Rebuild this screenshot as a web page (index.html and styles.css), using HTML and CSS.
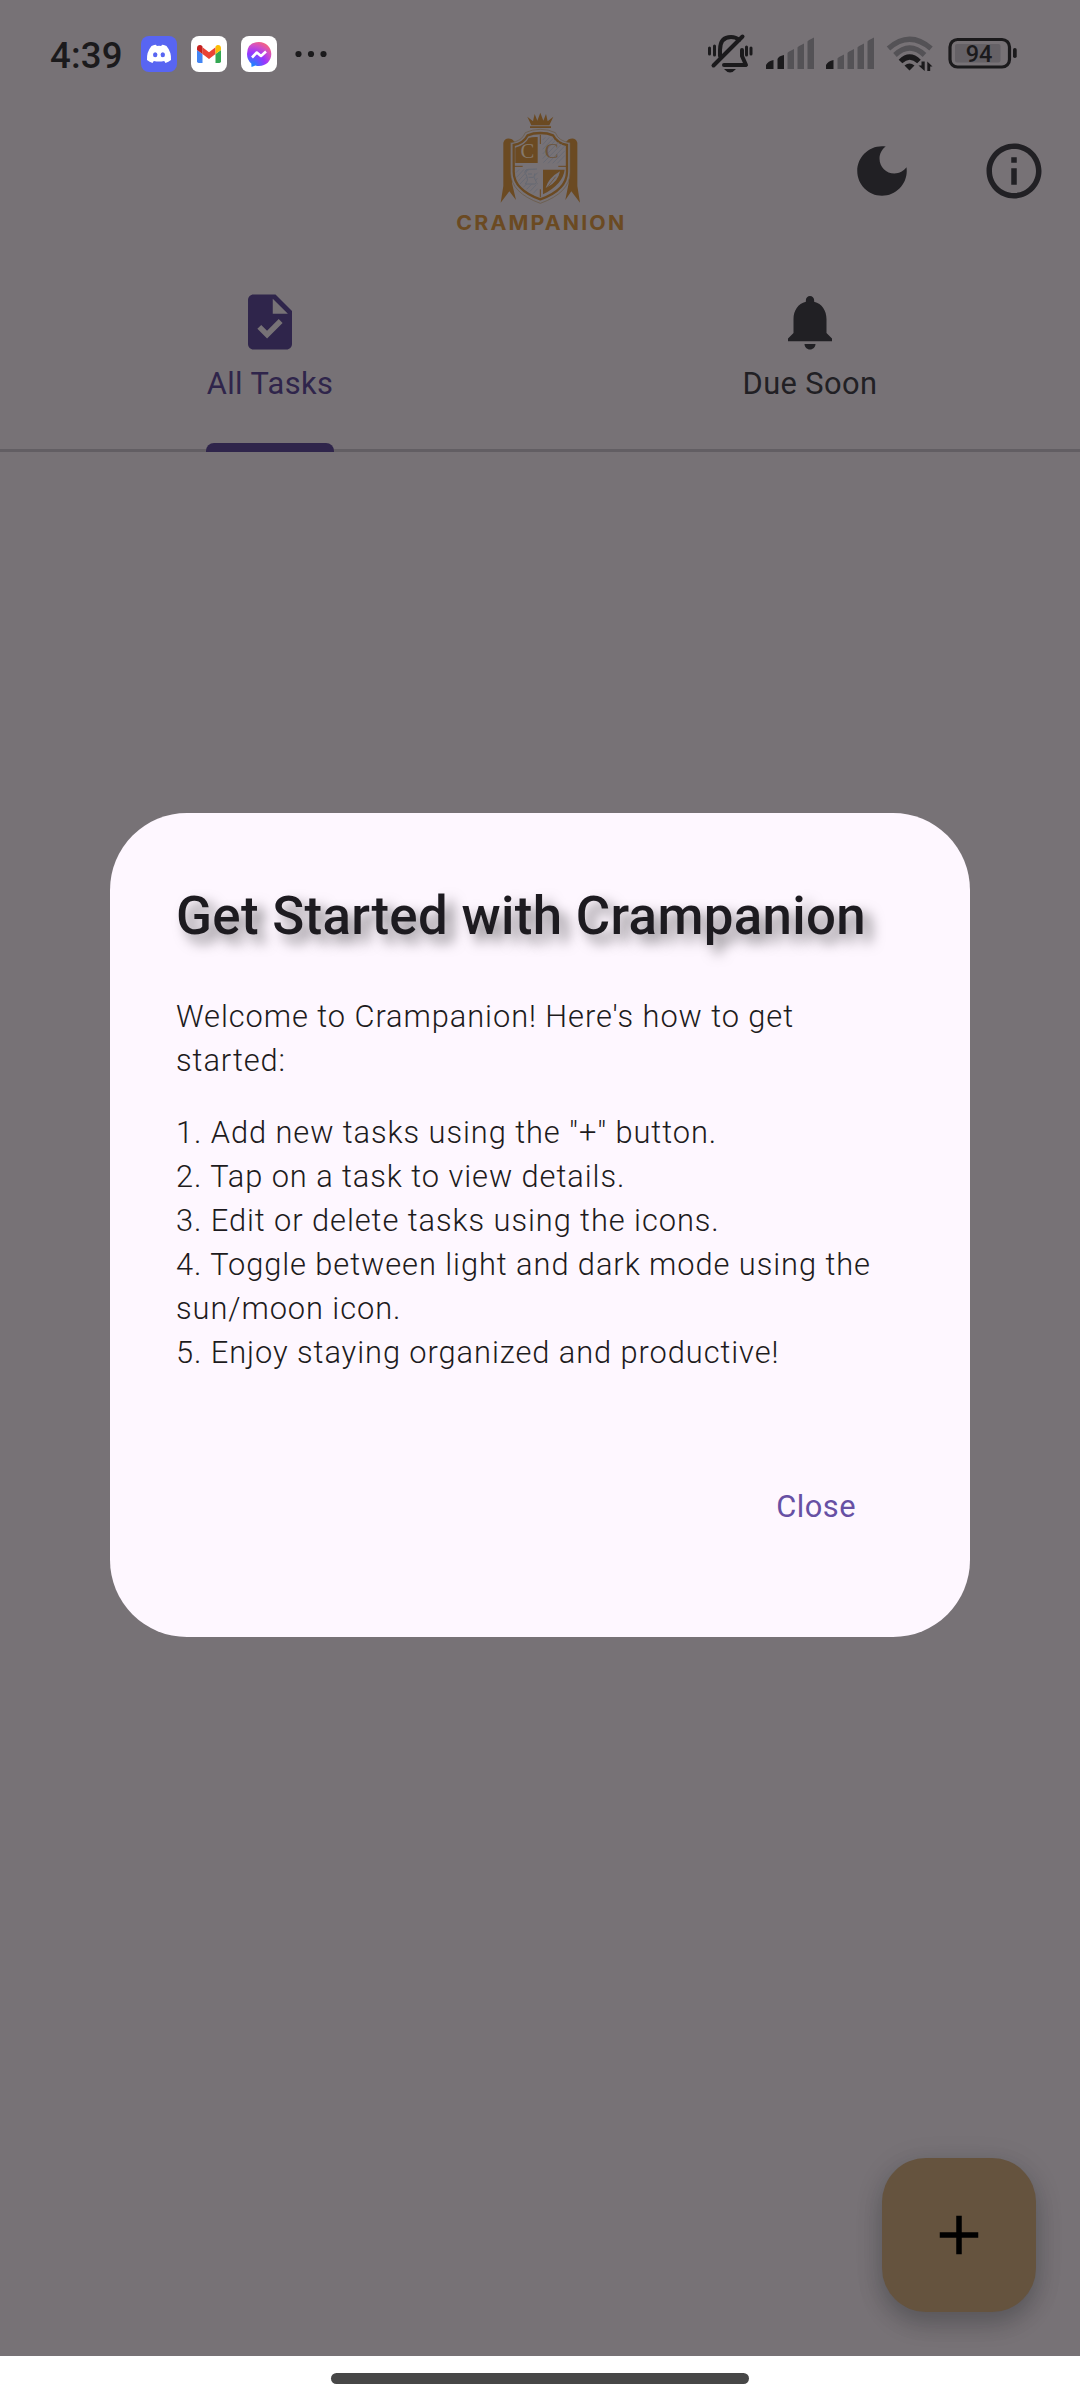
FILE: index.html
```
<!DOCTYPE html>
<html lang="en">
<head>
<meta charset="utf-8">
<title>Crampanion</title>
<link rel="stylesheet" href="styles.css">
</head>
<body>
<div class="screen">
  <header class="status">
    <span class="clock">4:39</span>
    <div class="notifs">
      <svg class="app" viewBox="0 0 36 36"><rect width="36" height="36" rx="8" fill="#5865f2"/><path fill="#fff" d="M10.500 10q3-1.300 4.500-1.300l.8 1.300q2.200-.3 4.400 0l.8-1.300q1.500 0 4.500 1.300Q30.500 16 30 24q-2.500 2.200-5.500 3l-1.300-2.100q-5.200 1.300-10.400 0L11.500 27Q8.500 26.200 6 24 5.500 16 10.500 10z"/><ellipse cx="14.200" cy="18.700" rx="2.200" ry="2.500" fill="#5865f2"/><ellipse cx="21.800" cy="18.700" rx="2.200" ry="2.500" fill="#5865f2"/></svg>
      <svg class="app" viewBox="0 0 36 36"><rect width="36" height="36" rx="8" fill="#fff"/><path fill="#4285f4" d="M6 14l5.500 4v9H7.700Q6 27 6 25.300z"/><path fill="#34a853" d="M30 14l-5.500 4v9h3.800q1.700 0 1.700-1.700z"/><path fill="#ea4335" d="M11.500 11.300L18 16.200l6.500-4.900V18L18 22.900 11.500 18z"/><path fill="#c5221f" d="M6 12Q6.200 9 9 9q1.200 0 2.500 1.400V18L6 14z"/><path fill="#fbbc04" d="M30 12q-.2-3-3-3-1.200 0-2.500 1.400V18l5.500-4z"/></svg>
      <svg class="app" viewBox="0 0 36 36"><defs><radialGradient id="msg" cx=".2" cy="1" r="1.15"><stop offset="0" stop-color="#0a90ff"/><stop offset=".5" stop-color="#9a35ff"/><stop offset=".75" stop-color="#d050c8"/><stop offset="1" stop-color="#ff6968"/></radialGradient></defs><rect width="36" height="36" rx="8" fill="#fff"/><path fill="url(#msg)" d="M18 6c7 0 12.300 5 12.300 12S25 30 18 30q-2 0-3.600-.5L10.500 31l-.2-3.600Q6 24 6 18 6 6 18 6z"/><path fill="none" stroke="#fff" stroke-width="2.600" stroke-linejoin="round" d="M11 21.500l4.800-5 4.200 3.500 5-4.500"/></svg>
      <svg class="dots" viewBox="0 0 32 8"><circle cx="3.500" cy="4" r="3.100"/><circle cx="16" cy="4" r="3.100"/><circle cx="28.500" cy="4" r="3.100"/></svg>
    </div>
    <svg class="indicators" viewBox="690 20 350 70">
      <g stroke="#1b1a1c" fill="none" stroke-width="4" stroke-linecap="round">
        <path d="M720 57V51q0-13 11-13 5 0 8 3M742 51v6l4 9H724" stroke-linejoin="round"/>
        <path d="M713.500 66.500L742.500 37.500"/>
        <path d="M709.500 49v6M714.500 47v9M746.500 48v8M751 49v6" stroke-width="3"/>
      </g>
      <path fill="#1b1a1c" d="M724 70h12q-6 7-12 0z"/>
      <path fill="#545256" d="M787.500 54q0-1 6.500-4v20h-6.500zM797.500 48.500q0-1 6.500-4V70h-6.500zM807.500 42.500q0-1 6.500-4V70h-6.500zM837.500 59.500q0-1 6.500-4V70h-6.500zM847.500 54q0-1 6.500-4v20h-6.500zM857.500 48.500q0-1 6.500-4V70h-6.500zM867.500 42.500q0-1 6.500-4V70h-6.500z"/>
      <path fill="#1b1a1c" d="M766 66q2-4 7.500-5v9H766zM777.500 60q1-3 6.500-4v14h-6.500zM826 66q2-4 7.500-5v9H826z"/>
      <g fill="none" stroke-width="5.200">
        <path stroke="#545256" d="M888.500 49.500q21-18.500 42.500 0M895 56q14.700-14 29.500 0"/>
        <path stroke="#1b1a1c" d="M900.500 62.500q9.200-9 18.500 0"/>
      </g>
      <path fill="#1b1a1c" d="M904.500 66.500q5-4 10 0l-5 5zM921.500 62.500h3.200V72l-6.200-5.500h3zM927.300 72V62.500l5.200 5h-2.300V72z"/>
      <rect x="955" y="45" width="45.500" height="18.500" rx="2" fill="#656166"/>
      <rect x="950" y="40.500" width="59.500" height="27.500" rx="7.500" fill="none" stroke="#1b1a1c" stroke-width="3.200"/>
      <rect x="1013" y="49" width="3.700" height="10" rx="1.800" fill="#1b1a1c"/>
      <text class="charge" x="979" y="63" text-anchor="middle">94</text>
    </svg>
  </header>

  <div class="appbar">
    <svg class="logo" viewBox="0 0 600 420">
      <g fill="#6b4a22">
        <path d="M262 50l17 14 5-22 8 20 9-24 9 24 8-20 5 22 17-14-12 26h-54zM270 79h63v5h-63z"/>
        <path d="M190 128q6-18 26-10l12 12q-12-4-12 14v106l12 50-20-26-26 34 8-50zM412 128q-6-18-26-10l-12 12q12-4 12 14v106l-10 50 18-26 26 34-8-50z"/>
      </g>
      <path fill="#777276" stroke="#69573f" stroke-width="2" d="M301 88q-25 0-45 10-10 26-44 30v90q0 60 89 92 89-32 89-92v-90q-34-4-44-30-20-10-45-10z"/>
      <path fill="none" stroke="#6b4a22" stroke-width="7" d="M301 99q-22 0-38 7-12 24-42 29v80q0 54 80 83 80-29 80-83v-80q-30-5-42-29-16-7-38-7z"/>
      <path fill="#6b4a22" d="M293 111v78h-67v-46q30-8 40-29 12-4 27-3zM309 209h65q-5 43-65 74z"/>
      <path fill="none" stroke="#656973" stroke-width="2.500" d="M308 120l8-8M308 134l20-22M308 148l33-34M308 162l39-42M308 176l48-50M310 188l56-57M324 190l50-52M338 190l37-38M352 190l23-24M228 218l10-10M230 232l22-24M234 244l33-36M240 252l42-44M250 262l43-44M260 268l33-34M270 274l23-24M280 280l13-14"/>
      <path fill="#777276" d="M253 216l28-8 5 24 6 22-34-2 5-16z"/>
      <path fill="none" stroke="#656973" stroke-width="3" d="M253 218q4-12 12-10l26-1M261 210q-9 10 0 20 5 12-5 22h28q9-2 2-12-8-8-1-20M264 222h12M266 232h14"/>
      <path fill="#777276" d="M317 264q8-30 43-50-6 32-36 46z"/><path stroke="#6b4a22" stroke-width="2" d="M317 268l30-38"/>
      <path stroke="#6b4a22" stroke-width="3" d="M301 104v28M301 268v24M220 199h28M355 199h28"/>
      <text class="monogram" x="262" y="174" fill="#85796d">C</text><text class="monogram" x="335" y="174" fill="#6b543b">C</text>
      <text class="brand" x="49" y="389" textLength="510" lengthAdjust="spacingAndGlyphs">CRAMPANION</text>
    </svg>
    <div class="actions">
      <svg class="icon" viewBox="0 0 24 24"><path d="M12 3c-4.970 0-9 4.030-9 9s4.030 9 9 9 9-4.030 9-9c0-.46-.04-.92-.1-1.360-.98 1.370-2.580 2.260-4.400 2.260-2.980 0-5.400-2.420-5.400-5.400 0-1.810.89-3.420 2.260-4.400-.44-.06-.9-.1-1.360-.1z"/></svg>
      <svg class="icon" viewBox="0 0 24 24"><path d="M11 7h2v2h-2zm0 4h2v6h-2zm1-9C6.480 2 2 6.480 2 12s4.480 10 10 10 10-4.480 10-10S17.520 2 12 2zm0 18c-4.410 0-8-3.590-8-8s3.590-8 8-8 8 3.590 8 8-3.590 8-8 8z"/></svg>
    </div>
  </div>

  <nav class="tabs">
    <div class="tab selected">
      <svg class="icon" viewBox="0 0 24 24"><path d="M14 2H6c-1.100 0-1.990.9-1.990 2L4 20c0 1.100.89 2 1.990 2H18c1.100 0 2-.9 2-2V8l-6-6zm-3.060 16L7.400 14.460l1.410-1.410 2.120 2.120 4.240-4.240 1.410 1.410L10.940 18zM13 9V3.500L18.500 9H13z"/></svg>
      <span class="label">All Tasks</span>
      <span class="marker"></span>
    </div>
    <div class="tab">
      <svg class="icon" viewBox="0 0 24 24"><path d="M12 22c1.100 0 2-.9 2-2h-4c0 1.100.89 2 2 2zm6-6v-5c0-3.070-1.640-5.640-4.500-6.320V4c0-.83-.67-1.500-1.500-1.500s-1.500.67-1.500 1.500v.68C7.630 5.360 6 7.920 6 11v5l-2 2v1h16v-1l-2-2z"/></svg>
      <span class="label">Due Soon</span>
    </div>
  </nav>

  <main class="content"></main>
  <div class="gesture"><span class="pill"></span></div>

  <button class="fab"><svg class="icon" viewBox="0 0 24 24"><path d="M19 13h-6v6h-2v-6H5v-2h6V5h2v6h6z"/></svg></button>

  <section class="dialog">
    <h1>Get Started with Crampanion</h1>
    <p>Welcome to Crampanion! Here's how to get<br>started:</p>
    <p class="steps">1. Add new tasks using the "+" button.<br>2. Tap on a task to view details.<br>3. Edit or delete tasks using the icons.<br>4. Toggle between light and dark mode using the<br>sun/moon icon.<br>5. Enjoy staying organized and productive!</p>
    <button class="close">Close</button>
  </section>
</div>
</body>
</html>
```
FILE: styles.css
```
* { box-sizing: border-box; }
body { margin: 0; background: #777276; font-family: Roboto, sans-serif; }
.screen {
  position: relative;
  width: 1080px;
  height: 2400px;
  overflow: hidden;
  display: flex;
  flex-direction: column;
  background: #777276;
  color: #212024;
}
.status { display: flex; align-items: center; height: 108px; padding: 0 40px 0 50px; flex: none; }
.clock { width: 91px; font-size: 36.6px; font-weight: 500; letter-spacing: .2px; color: #1b1a1c; line-height: 44px; padding-top: 3px; }
.notifs { display: flex; align-items: center; gap: 14px; }
.app { width: 36px; height: 36px; }
.dots { width: 32px; height: 8px; margin-left: 4px; fill: #1b1a1c; }
.indicators { width: 350px; height: 70px; margin-left: auto; }
.charge { font-size: 23.5px; font-weight: 500; fill: #1b1a1c; }

.icon { display: block; width: 66px; height: 66px; fill: currentColor; flex: none; }
.appbar {
  display: grid;
  grid-template-columns: 1fr 200px 1fr;
  grid-template-rows: 126px;
  align-items: center;
  height: 126px;
  padding: 0 33px;
  flex: none;
}
.logo { width: 200px; height: 140px; grid-column: 2; margin-top: -2px; }
.monogram { font-family: "Liberation Serif", serif; font-size: 62px; text-anchor: middle; }
.brand { font-family: Inter, sans-serif; font-size: 60px; font-weight: 700; letter-spacing: 6px; fill: #6b4a22; }
.actions { display: flex; justify-content: flex-end; gap: 66px; }

.tabs { display: grid; grid-template-columns: 1fr 1fr; height: 218px; border-bottom: 3px solid #625e63; flex: none; }
.tab { display: flex; flex-direction: column; align-items: center; padding-top: 55px; }
.selected { color: #2f254b; }
.label { margin-top: 7px; font-size: 30.8px; line-height: 44px; letter-spacing: .4px; }
.marker { width: 128px; height: 9px; margin-top: 37px; border-radius: 8px 8px 0 0; background: #2f254b; }
.content { flex: 1; }
.gesture { display: flex; justify-content: center; height: 44px; padding-top: 17px; background: #fff; flex: none; }
.pill { width: 418px; height: 11px; border-radius: 6px; background: #474747; }

.fab {
  position: absolute;
  right: 44px;
  bottom: 88px;
  display: flex;
  align-items: center;
  justify-content: center;
  width: 154px;
  height: 154px;
  padding: 0;
  border: 0;
  border-radius: 44px;
  background: #65533e;
  color: #000;
  box-shadow: 0 12px 24px rgba(0, 0, 0, .2), 0 4px 30px rgba(20, 40, 50, .1);
}
.dialog {
  position: absolute;
  left: 110px;
  top: 812.5px;
  display: flex;
  flex-direction: column;
  width: 860px;
  height: 824px;
  padding: 68px 66px 66px;
  border-radius: 77px;
  background: #fef7ff;
  color: #1d1b20;
}
h1 { margin: 0; font-size: 52.8px; line-height: 70px; font-weight: 500; letter-spacing: .32px; white-space: nowrap; text-shadow: 8px 8px 13px rgba(0, 0, 0, .5); }
p { margin: 44px 0 0; font-size: 30.8px; line-height: 44px; font-weight: 300; letter-spacing: .93px; white-space: nowrap; }
.steps { margin-top: 28px; }
.close { align-self: flex-end; margin: 110px 48px 0 0; padding: 0; border: 0; background: none; font: 400 30.8px/44px Roboto, sans-serif; letter-spacing: .5px; color: #6750a4; }
```
